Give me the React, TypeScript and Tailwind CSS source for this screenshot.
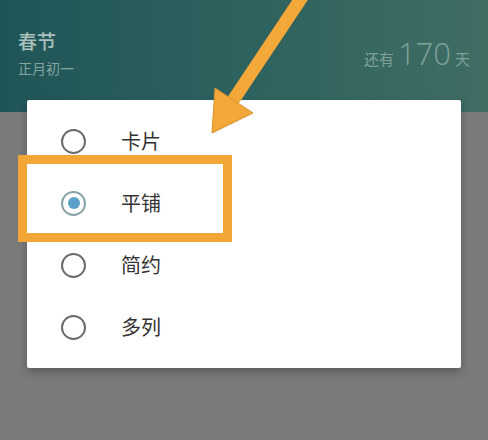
// Layout picker dialog over the festival header, with annotation arrow + highlight box.

import { useState } from "react";

const OPTIONS = ["卡片", "平铺", "简约", "多列"];

const FONT = { fontFamily: '"Noto Sans CJK SC", "Noto Sans", sans-serif' };

function Radio({ checked }: { checked: boolean }) {
  if (checked) {
    return (
      <span className="grid h-[25px] w-[25px] shrink-0 place-items-center rounded-full border-[2.5px] border-[#87a3a6]">
        <span className="h-[12px] w-[12px] rounded-full bg-[#5ba0c8]" />
      </span>
    );
  }
  return <span className="h-[25px] w-[25px] shrink-0 rounded-full border-[2.5px] border-[#6b6b6b]" />;
}

export default function App() {
  const [picked, setPicked] = useState(1);

  return (
    <div className="relative h-[440px] w-[488px] overflow-hidden bg-[#7a7a7a]" style={FONT}>
      {/* festival header */}
      <div className="flex h-[112px] items-start justify-between bg-gradient-to-r from-[#1f5558] via-[#2e625e] to-[#3f6d64] px-[18px] pt-[30px]">
        <div className="flex flex-col gap-[8px]">
          <span className="text-[19px] font-medium leading-[22px] text-[#a9c0bc]">春节</span>
          <span className="text-[14px] leading-[16px] text-[#86a49f]">正月初一</span>
        </div>
        <div className="flex items-baseline gap-[4px] pt-[8px] text-[#7fa39b]">
          <span className="text-[15px]">还有</span>
          <span className="text-[31px] leading-none" style={{ fontFamily: '"Open Sans", "Noto Sans", sans-serif', fontWeight: 300 }}>
            170
          </span>
          <span className="text-[15px]">天</span>
        </div>
      </div>

      {/* dialog */}
      <div className="absolute left-[27px] top-[100px] w-[434px] rounded-[2px] bg-white py-[10px] shadow-[0_4px_8px_rgba(0,0,0,0.25)]">
        {OPTIONS.map((label, i) => (
          <button
            key={label}
            type="button"
            onClick={() => setPicked(i)}
            className="flex h-[62px] w-full items-center gap-[35px] pl-[34px] text-left"
          >
            <Radio checked={picked === i} />
            <span className="text-[20px] text-[#333333]">{label}</span>
          </button>
        ))}
      </div>

      {/* highlight box */}
      <div className="absolute left-[18px] top-[155px] h-[87px] w-[214px] border-[9px] border-[#f2a636]" />

      {/* annotation arrow */}
      <svg className="absolute left-0 top-0" width="488" height="440" viewBox="0 0 488 440">
        <line x1="304" y1="-6" x2="232" y2="102" stroke="#f2a93a" strokeWidth="13" />
        <polygon points="212,133 215,88 253,113" fill="#f2a93a" stroke="#d8902c" strokeWidth="1" strokeLinejoin="round" />
      </svg>
    </div>
  );
}
